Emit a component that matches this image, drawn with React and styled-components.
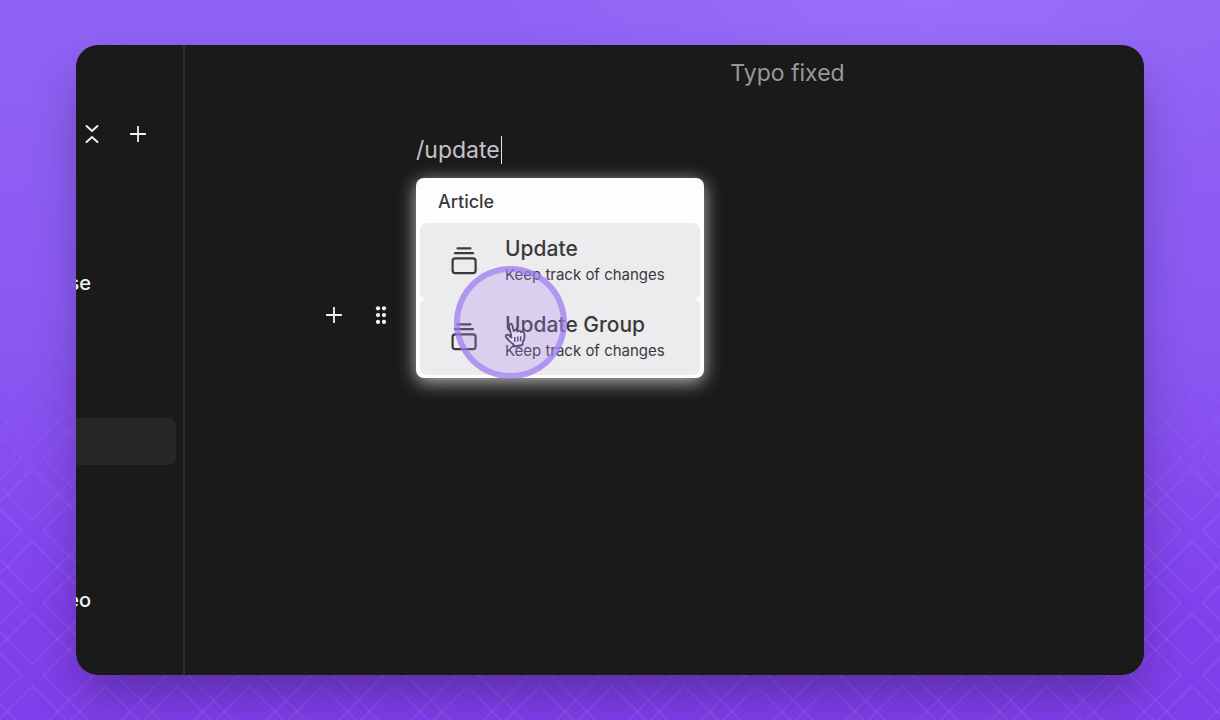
import React from "react";
import styled, { createGlobalStyle } from "styled-components";

const menuItems = [
  { id: "update", title: "Update", text: "Keep track of changes" },
  { id: "group", title: "Update Group", text: "Keep track of changes" },
];

const tiles = [-1, 0, 1];

function Lattice() {
  return (
    <StLattice aria-hidden="true">
      <defs>
        <pattern
          id="lattice"
          x="32.5"
          y="34.2"
          width="72.45"
          height="72.45"
          patternUnits="userSpaceOnUse"
        >
          {tiles.map((row) =>
            tiles.map((col) => (
              <path
                key={`${row}${col}`}
                transform={`translate(${col * 72.45} ${row * 72.45})`}
                d="M-62 62L0 0L62 62M11 -11L72.45 50.5M-11 -11L-72.45 50.5"
                fill="none"
                stroke="#b08cff"
                strokeOpacity="0.22"
                strokeWidth="1.4"
              />
            ))
          )}
        </pattern>
        <linearGradient id="fade" x1="0" y1="0" x2="0" y2="1">
          <stop offset="0.44" stopColor="#000" />
          <stop offset="0.7" stopColor="#fff" />
        </linearGradient>
        <mask id="latticeMask">
          <rect width="100%" height="100%" fill="url(#fade)" />
        </mask>
      </defs>
      <rect
        width="100%"
        height="100%"
        fill="url(#lattice)"
        mask="url(#latticeMask)"
      />
    </StLattice>
  );
}

function PlusIcon() {
  return (
    <svg width="16" height="16" viewBox="0 0 16 16" aria-hidden="true">
      <path d="M8 0.5V15.5M0.5 8H15.5" stroke="#f2f2f2" strokeWidth="1.8" strokeLinecap="round" />
    </svg>
  );
}

function CollapseIcon() {
  return (
    <svg width="14" height="20" viewBox="0 0 14 20" aria-hidden="true">
      <path
        d="M1.5 2L7 7L12.5 2M1.5 18L7 13L12.5 18"
        fill="none"
        stroke="#f2f2f2"
        strokeWidth="2"
        strokeLinecap="round"
      />
    </svg>
  );
}

function DragIcon() {
  return (
    <svg width="12" height="18" viewBox="0 0 12 18" fill="#f4f4f4" aria-hidden="true">
      {[2.3, 9.1, 15.9].map((y) => (
        <React.Fragment key={y}>
          <circle cx="3" cy={y} r="2.1" />
          <circle cx="9" cy={y} r="2.1" />
        </React.Fragment>
      ))}
    </svg>
  );
}

function StackIcon() {
  return (
    <svg width="26" height="28" viewBox="0 0 26 28" fill="none" stroke="#3a3a3c" aria-hidden="true">
      <path d="M6.5 1.3H19.5M4 6.2H22" strokeWidth="2.2" strokeLinecap="round" />
      <rect x="1.6" y="11.4" width="23" height="14.8" rx="2.6" strokeWidth="2.2" />
    </svg>
  );
}

function HandIcon() {
  return (
    <svg width="24" height="26" viewBox="0 0 24 26" aria-hidden="true">
      <path
        d="M7.5 15.5L5.2 4.2C4.8 1.4 7.6 .8 8.3 3.4L9.8 9.2C10 7.5 13 7.4 13.3 9.5C13.8 8 16.5 8.2 16.8 10.2C17.6 9 20.2 9.4 20.4 12C20.8 15.5 20.4 17.8 18.8 20L18.5 23L10 24.5L9.4 22.3C6.6 20.6 4.5 18.2 2.2 15.4C.8 13.4 3.2 12 4.8 13.2Z"
        fill="#e2daf5"
        stroke="#5a4d78"
        strokeWidth="1.8"
        strokeLinejoin="round"
      />
      <path d="M10.8 15V20M13.8 14.6V19.6M16.6 14.2V19.2" stroke="#5a4d78" strokeWidth="1.4" />
    </svg>
  );
}

function App() {
  return (
    <>
      <GlobalStyle />
      <StPage>
        <Lattice />
        <StWindow>
          <StSidebar>
            <StTools>
              <StIconBtn aria-label="Collapse all">
                <CollapseIcon />
              </StIconBtn>
              <StIconBtn aria-label="Add page">
                <PlusIcon />
              </StIconBtn>
            </StTools>
            <StNav>
              <StNavLink href="#se">se</StNavLink>
              <StActiveItem />
              <StNavLink href="#eo">eo</StNavLink>
            </StNav>
          </StSidebar>
          <StGutter>
            <StIconBtn aria-label="Add block">
              <PlusIcon />
            </StIconBtn>
            <StIconBtn aria-label="Move block">
              <DragIcon />
            </StIconBtn>
          </StGutter>
          <StEditor>
            <StTitle>Typo fixed</StTitle>
            <StCommand>
              <StInput aria-label="Command" defaultValue="/update" size="7" />
              <StCaret />
            </StCommand>
            <StMenu>
              <StMenuTitle>Article</StMenuTitle>
              {menuItems.map((item) => (
                <StMenuItem key={item.id}>
                  <StackIcon />
                  <span>
                    <StItemTitle>{item.title}</StItemTitle>
                    <StItemText>{item.text}</StItemText>
                  </span>
                </StMenuItem>
              ))}
              <StPointer>
                <HandIcon />
              </StPointer>
            </StMenu>
          </StEditor>
        </StWindow>
      </StPage>
    </>
  );
}

export default App;

const GlobalStyle = createGlobalStyle`
  * {
    box-sizing: border-box;
  }
  body {
    margin: 0;
    font-family: Inter, "Liberation Sans", sans-serif;
  }
  button, input {
    padding: 0;
    border: none;
    background: none;
    font-family: inherit;
  }
`;

const StPage = styled.div`
  position: relative;
  display: flex;
  min-height: 100vh;
  padding: 45px 76px;
  background: radial-gradient(ellipse 420px 200px at 76% 0, rgba(165, 130, 255, 0.4), transparent),
    linear-gradient(180deg, #9163f5 0%, #8b59f2 45%, #8140ec 85%, #803eea 100%);
`;

const StLattice = styled.svg`
  position: absolute;
  inset: 0;
  width: 100%;
  height: 100%;
`;

const StWindow = styled.main`
  position: relative;
  display: flex;
  flex: 1;
  border-radius: 22px;
  background: #1a1a1b;
  box-shadow: 0 24px 48px -8px rgba(30, 20, 60, 0.42);
`;

const StSidebar = styled.aside`
  display: flex;
  flex-direction: column;
  width: 109px;
  padding-top: 76px;
  border-right: 2px solid #2e2e30;
`;

const StTools = styled.div`
  display: flex;
  gap: 30px;
  padding-left: 8px;
`;

const StIconBtn = styled.button`
  display: flex;
  align-items: center;
  justify-content: center;
  min-width: 16px;
  height: 26px;
  cursor: pointer;
`;

const StNav = styled.nav`
  display: flex;
  flex-direction: column;
  gap: 122px;
  padding-top: 123px;
`;

const StNavLink = styled.a`
  display: flex;
  justify-content: flex-end;
  width: 15px;
  overflow: hidden;
  color: #f4f4f5;
  font-size: 20px;
  font-weight: 500;
  line-height: 26px;
  text-decoration: none;
`;

const StActiveItem = styled.div`
  height: 47px;
  margin-right: 7px;
  border-radius: 0 8px 8px 0;
  background: #272728;
`;

const StGutter = styled.div`
  display: flex;
  justify-content: flex-end;
  align-items: flex-start;
  gap: 31px;
  width: 231px;
  padding: 257px 27px 0 0;
`;

const StEditor = styled.section`
  flex: 1;
  padding-top: 12px;
`;

const StTitle = styled.p`
  margin: 0;
  padding-left: 15px;
  color: #98989a;
  font-size: 23px;
  line-height: 32px;
  text-align: center;
`;

const StCommand = styled.div`
  display: flex;
  align-items: center;
  gap: 1px;
  margin: 45px 0 12px;
`;

const StInput = styled.input`
  field-sizing: content;
  height: 32px;
  color: #c4c4c6;
  font-size: 23px;
  outline: none;
`;

const StCaret = styled.span`
  width: 1px;
  height: 28px;
  background: #e6e6e6;
`;

const StMenu = styled.div`
  position: relative;
  width: 288px;
  padding: 4px 4px 3px;
  border-radius: 8px;
  background: #fdfdfe;
  box-shadow: 0 4px 18px rgba(255, 255, 255, 0.7);
`;

const StMenuTitle = styled.h2`
  margin: 0;
  padding: 8px 18px 9px;
  color: #3a3a3c;
  font-size: 18px;
  font-weight: 500;
  line-height: 24px;
`;

const StMenuItem = styled.button`
  display: flex;
  align-items: center;
  gap: 28px;
  width: 100%;
  height: 76px;
  padding: 0 31px;
  border-radius: 7px;
  background: #ececee;
  color: #3a3a3c;
  text-align: left;
  cursor: pointer;
`;

const StItemTitle = styled.span`
  display: block;
  font-size: 21px;
  font-weight: 500;
  line-height: 28px;
`;

const StItemText = styled.span`
  display: block;
  font-size: 15px;
  line-height: 24px;
`;

const StPointer = styled.div`
  position: absolute;
  top: 88px;
  left: 38px;
  display: flex;
  align-items: center;
  justify-content: center;
  width: 113px;
  height: 113px;
  padding: 24px 0 0 10px;
  border: 6px solid rgba(158, 122, 240, 0.75);
  border-radius: 50%;
  background: rgba(170, 130, 240, 0.27);
  background-clip: padding-box;
  pointer-events: none;
`;
